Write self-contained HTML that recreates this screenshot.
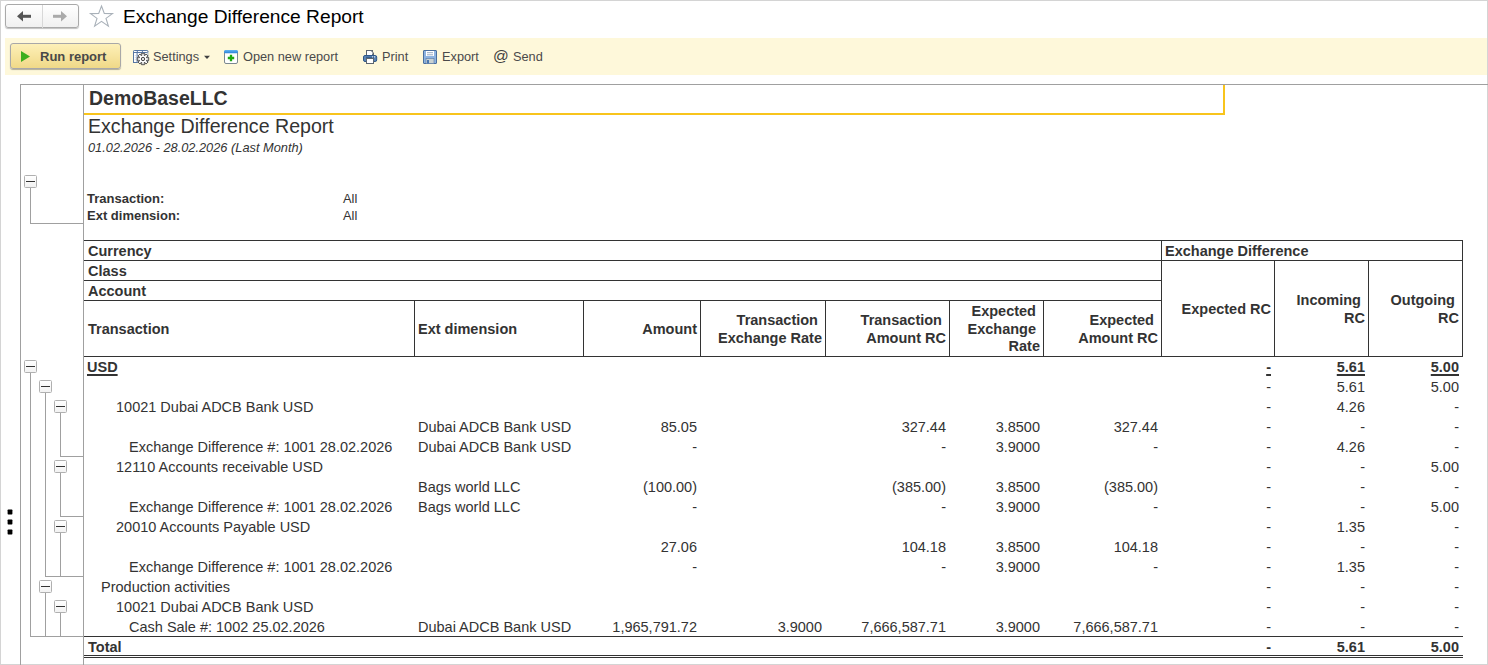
<!DOCTYPE html>
<html><head><meta charset="utf-8"><style>
html,body{margin:0;padding:0;}
body{width:1488px;height:665px;position:relative;overflow:hidden;background:#fff;font-family:"Liberation Sans", sans-serif;}
</style></head><body>
<div style="position:absolute;left:0px;top:0px;width:1488px;height:665px;box-sizing:border-box;border-left:1px solid #d4d4d4;border-top:1px solid #d4d4d4;border-right:1px solid #d4d4d4;border-bottom:1px solid #d4d4d4"></div><div style="position:absolute;left:5px;top:4px;width:72px;height:22px;border:1px solid #a9a9a9;border-radius:3px;background:linear-gradient(#ffffff,#f0f0f0);box-shadow:0 1px 1px rgba(0,0,0,0.25)"></div><div style="position:absolute;left:42px;top:5px;width:1px;height:23px;background:#d8d8d8"></div><svg style="position:absolute;left:0;top:0" width="120" height="35"><path d="M17 16.2 L23 11 L23 21.5 Z" fill="#555"/><rect x="22" y="14.8" width="9" height="3" fill="#555"/><path d="M67 16.2 L61 11 L61 21.5 Z" fill="#aaa"/><rect x="53" y="14.8" width="9" height="3" fill="#aaa"/><path d="M101.5 6 L104.3 13.4 L112.5 13.6 L106 18.4 L108.4 26.2 L101.5 21.4 L94.6 26.2 L97 18.4 L90.5 13.6 L98.7 13.4 Z" fill="none" stroke="#a9b1b9" stroke-width="1.1"/></svg><div style="position:absolute;left:123px;top:5px;line-height:24px;font-size:19.2px;font-weight:400;color:#000;white-space:pre;">Exchange Difference Report</div><div style="position:absolute;left:5px;top:38px;width:1482px;height:37px;background:#fef8da"></div><div style="position:absolute;left:10px;top:43px;width:109px;height:24px;border:1px solid #a8a8a8;border-radius:3px;background:linear-gradient(#fdf0b8,#f0d988);box-shadow:0 1px 1px rgba(0,0,0,0.3)"></div><svg style="position:absolute;left:0;top:0" width="40" height="75"><path d="M21 51 L30 56.5 L21 62 Z" fill="#3cae1e"/></svg><div style="position:absolute;left:40px;top:47px;line-height:20px;font-size:13px;font-weight:700;color:#484848;white-space:pre;">Run report</div><div style="position:absolute;left:153px;top:47px;line-height:20px;font-size:12.75px;font-weight:400;color:#4a4a4a;white-space:pre;">Settings</div><div style="position:absolute;left:243px;top:47px;line-height:20px;font-size:12.75px;font-weight:400;color:#4a4a4a;white-space:pre;">Open new report</div><div style="position:absolute;left:382px;top:47px;line-height:20px;font-size:12.75px;font-weight:400;color:#4a4a4a;white-space:pre;">Print</div><div style="position:absolute;left:442px;top:47px;line-height:20px;font-size:12.75px;font-weight:400;color:#4a4a4a;white-space:pre;">Export</div><div style="position:absolute;left:493px;top:46px;line-height:20px;font-size:15.5px;font-weight:400;color:#404040;white-space:pre;">@</div><div style="position:absolute;left:513px;top:47px;line-height:20px;font-size:12.75px;font-weight:400;color:#4a4a4a;white-space:pre;">Send</div><svg style="position:absolute;left:0;top:0" width="560" height="75">
<rect x="133.5" y="50.5" width="14.4" height="12" rx="1" fill="#fff" stroke="#9fb3cf"/>
<rect x="133.5" y="50.5" width="14.4" height="2" rx="1" fill="#fff" stroke="#5676a3"/>
<rect x="133.5" y="52.5" width="3.6" height="10" fill="#fff" stroke="#5676a3"/>
<path d="M137.3 50.5 v2 M142.4 50.5 v2" stroke="#5676a3"/>
<path d="M135.3 55.5 v0.6 M135.3 57.5 v0.6 M135.3 59.5 v0.6" stroke="#8098bb" stroke-width="0.8"/>
<path d="M141.48 53.30 L144.52 53.30 L144.05 55.24 L144.91 55.60 L145.96 53.90 L148.10 56.04 L146.40 57.09 L146.76 57.95 L148.70 57.48 L148.70 60.52 L146.76 60.05 L146.40 60.91 L148.10 61.96 L145.96 64.10 L144.91 62.40 L144.05 62.76 L144.52 64.70 L141.48 64.70 L141.95 62.76 L141.09 62.40 L140.04 64.10 L137.90 61.96 L139.60 60.91 L139.24 60.05 L137.30 60.52 L137.30 57.48 L139.24 57.95 L139.60 57.09 L137.90 56.04 L140.04 53.90 L141.09 55.60 L141.95 55.24 Z" fill="#fff" stroke="#4a4a4a" stroke-width="0.95" stroke-linejoin="miter"/>
<circle cx="143" cy="59" r="1.7" fill="#ddd" stroke="#4a4a4a" stroke-width="1"/>
<path d="M204 55.8 L210 55.8 L207 59 Z" fill="#404040"/>
<rect x="224.5" y="50.5" width="13" height="13" rx="1.5" fill="#fff" stroke="#7b8890"/>
<defs><linearGradient id="gb" x1="0" y1="0" x2="0" y2="1"><stop offset="0" stop-color="#62b4f2"/><stop offset="1" stop-color="#2a82d8"/></linearGradient></defs><rect x="224" y="50" width="14" height="3.2" rx="1.5" fill="url(#gb)"/>
<path d="M231 54.8 v6.4 M227.8 58 h6.4" stroke="#1fa80f" stroke-width="2.3"/>
<rect x="366.5" y="50.5" width="6" height="5" fill="#fff" stroke="#5c6670"/>
<path d="M371 50.5 L373.5 53 L373.5 55.5" fill="#fff" stroke="#5c6670"/>
<rect x="363.5" y="55.5" width="13.2" height="6" rx="1.5" fill="#5a84b5" stroke="#2f5888"/>
<path d="M366 57.3 h8" stroke="#2f5888" stroke-width="1"/>
<rect x="366.5" y="58.5" width="7" height="5" fill="#fff" stroke="#5c6670"/>
<circle cx="372.5" cy="56.8" r="0.6" fill="#fff"/><circle cx="374.6" cy="56.8" r="0.6" fill="#fff"/>
<rect x="423.5" y="50.5" width="13" height="13" rx="0.5" fill="#8db3e0" stroke="#4a6f9e"/>
<rect x="426" y="51" width="8" height="5" fill="#fff"/>
<path d="M427 52.7 h6 M427 54.8 h6" stroke="#8aa0bb" stroke-width="0.9"/>
<rect x="426" y="58.6" width="8" height="4.9" fill="#c9d2d3" stroke="#5a7aa5" stroke-width="0.6"/>
<rect x="427" y="60" width="2" height="3.5" fill="#4a77b0"/>
</svg><div style="position:absolute;left:20px;top:84px;width:1468px;height:1px;background:#a0a0a0"></div><div style="position:absolute;left:20px;top:84px;width:1px;height:581px;background:#a0a0a0"></div><div style="position:absolute;left:83px;top:84px;width:1px;height:581px;background:#a0a0a0"></div><div style="position:absolute;left:84px;top:113px;width:1141px;height:2px;background:#f8c41c"></div><div style="position:absolute;left:1223px;top:85px;width:2px;height:30px;background:#f8c41c"></div><div style="position:absolute;left:89px;top:86px;line-height:24px;font-size:19.5px;font-weight:700;color:#333;white-space:pre;">DemoBaseLLC</div><div style="position:absolute;left:88px;top:115px;line-height:22px;font-size:19.6px;font-weight:400;color:#333;white-space:pre;">Exchange Difference Report</div><div style="position:absolute;left:88px;top:139px;line-height:18px;font-size:12.8px;font-weight:400;color:#333;white-space:pre;font-style:italic">01.02.2026 - 28.02.2026 (Last Month)</div><div style="position:absolute;left:87px;top:190px;line-height:18px;font-size:13px;font-weight:700;color:#333;white-space:pre;">Transaction:</div><div style="position:absolute;left:87px;top:207px;line-height:18px;font-size:13px;font-weight:700;color:#333;white-space:pre;">Ext dimension:</div><div style="position:absolute;left:343px;top:190px;line-height:18px;font-size:12.8px;font-weight:400;color:#333;white-space:pre;">All</div><div style="position:absolute;left:343px;top:207px;line-height:18px;font-size:12.8px;font-weight:400;color:#333;white-space:pre;">All</div><div style="position:absolute;left:24px;top:175px;width:11px;height:11px;border:1px solid #b0b0b0;border-radius:1.5px;background:linear-gradient(#fff,#f2f2f2)"></div><div style="position:absolute;left:26px;top:181px;width:9px;height:1px;background:#333"></div><div style="position:absolute;left:30px;top:188px;width:1px;height:36px;background:#a0a0a0"></div><div style="position:absolute;left:30px;top:223px;width:54px;height:1px;background:#a0a0a0"></div><div style="position:absolute;left:84px;top:240px;width:1379px;height:1px;background:#333"></div><div style="position:absolute;left:84px;top:260px;width:1379px;height:1px;background:#333"></div><div style="position:absolute;left:84px;top:280px;width:1078px;height:1px;background:#333"></div><div style="position:absolute;left:84px;top:300px;width:1078px;height:1px;background:#333"></div><div style="position:absolute;left:84px;top:356px;width:1379px;height:1px;background:#333"></div><div style="position:absolute;left:1161px;top:240px;width:1px;height:117px;background:#333"></div><div style="position:absolute;left:1462px;top:240px;width:1px;height:117px;background:#333"></div><div style="position:absolute;left:414px;top:300px;width:1px;height:57px;background:#333"></div><div style="position:absolute;left:583px;top:300px;width:1px;height:57px;background:#333"></div><div style="position:absolute;left:700px;top:300px;width:1px;height:57px;background:#333"></div><div style="position:absolute;left:825px;top:300px;width:1px;height:57px;background:#333"></div><div style="position:absolute;left:949px;top:300px;width:1px;height:57px;background:#333"></div><div style="position:absolute;left:1043px;top:300px;width:1px;height:57px;background:#333"></div><div style="position:absolute;left:1274px;top:260px;width:1px;height:97px;background:#333"></div><div style="position:absolute;left:1368px;top:260px;width:1px;height:97px;background:#333"></div><div style="position:absolute;left:88px;top:242px;line-height:19px;font-size:14.5px;font-weight:700;color:#333;white-space:pre;">Currency</div><div style="position:absolute;left:88px;top:262px;line-height:19px;font-size:14.5px;font-weight:700;color:#333;white-space:pre;">Class</div><div style="position:absolute;left:88px;top:282px;line-height:19px;font-size:14.5px;font-weight:700;color:#333;white-space:pre;">Account</div><div style="position:absolute;left:1165px;top:242px;line-height:19px;font-size:14.5px;font-weight:700;color:#333;white-space:pre;">Exchange Difference</div><div style="position:absolute;left:88px;top:319px;line-height:20px;font-size:14.5px;font-weight:700;color:#333;white-space:pre;">Transaction</div><div style="position:absolute;left:418px;top:319px;line-height:20px;font-size:14.5px;font-weight:700;color:#333;white-space:pre;">Ext dimension</div><div style="position:absolute;right:791px;top:319px;line-height:20px;font-size:14.5px;font-weight:700;color:#333;white-space:pre;text-align:right;">Amount</div><div style="position:absolute;right:666px;top:312px;line-height:17.6px;font-size:14.5px;font-weight:700;color:#333;white-space:pre;text-align:right;">Transaction 
Exchange Rate</div><div style="position:absolute;right:542px;top:312px;line-height:17.6px;font-size:14.5px;font-weight:700;color:#333;white-space:pre;text-align:right;">Transaction 
Amount RC</div><div style="position:absolute;right:448px;top:303px;line-height:17.6px;font-size:14.5px;font-weight:700;color:#333;white-space:pre;text-align:right;">Expected 
Exchange 
Rate</div><div style="position:absolute;right:330px;top:312px;line-height:17.6px;font-size:14.5px;font-weight:700;color:#333;white-space:pre;text-align:right;">Expected 
Amount RC</div><div style="position:absolute;right:217px;top:299px;line-height:20px;font-size:14.5px;font-weight:700;color:#333;white-space:pre;text-align:right;">Expected RC</div><div style="position:absolute;right:123px;top:292px;line-height:17.6px;font-size:14.5px;font-weight:700;color:#333;white-space:pre;text-align:right;">Incoming 
RC</div><div style="position:absolute;right:29px;top:292px;line-height:17.6px;font-size:14.5px;font-weight:700;color:#333;white-space:pre;text-align:right;">Outgoing 
RC</div><div style="position:absolute;left:87px;top:358px;line-height:19px;font-size:14.5px;font-weight:700;color:#333;white-space:pre;text-decoration:underline;text-decoration-thickness:2px;text-underline-offset:2px">USD</div><div style="position:absolute;right:217px;top:358px;line-height:19px;font-size:14.5px;font-weight:700;color:#333;white-space:pre;text-align:right;text-decoration:underline;text-decoration-thickness:2px;text-underline-offset:2px">-</div><div style="position:absolute;right:123px;top:358px;line-height:19px;font-size:14.5px;font-weight:700;color:#333;white-space:pre;text-align:right;text-decoration:underline;text-decoration-thickness:2px;text-underline-offset:2px">5.61</div><div style="position:absolute;right:29px;top:358px;line-height:19px;font-size:14.5px;font-weight:700;color:#333;white-space:pre;text-align:right;text-decoration:underline;text-decoration-thickness:2px;text-underline-offset:2px">5.00</div><div style="position:absolute;right:217px;top:378px;line-height:19px;font-size:14.5px;font-weight:400;color:#333;white-space:pre;text-align:right;">-</div><div style="position:absolute;right:123px;top:378px;line-height:19px;font-size:14.5px;font-weight:400;color:#333;white-space:pre;text-align:right;">5.61</div><div style="position:absolute;right:29px;top:378px;line-height:19px;font-size:14.5px;font-weight:400;color:#333;white-space:pre;text-align:right;">5.00</div><div style="position:absolute;left:116px;top:398px;line-height:19px;font-size:14.5px;font-weight:400;color:#333;white-space:pre;">10021 Dubai ADCB Bank USD</div><div style="position:absolute;right:217px;top:398px;line-height:19px;font-size:14.5px;font-weight:400;color:#333;white-space:pre;text-align:right;">-</div><div style="position:absolute;right:123px;top:398px;line-height:19px;font-size:14.5px;font-weight:400;color:#333;white-space:pre;text-align:right;">4.26</div><div style="position:absolute;right:29px;top:398px;line-height:19px;font-size:14.5px;font-weight:400;color:#333;white-space:pre;text-align:right;">-</div><div style="position:absolute;left:418px;top:418px;line-height:19px;font-size:14.5px;font-weight:400;color:#333;white-space:pre;">Dubai ADCB Bank USD</div><div style="position:absolute;right:791px;top:418px;line-height:19px;font-size:14.5px;font-weight:400;color:#333;white-space:pre;text-align:right;">85.05</div><div style="position:absolute;right:542px;top:418px;line-height:19px;font-size:14.5px;font-weight:400;color:#333;white-space:pre;text-align:right;">327.44</div><div style="position:absolute;right:448px;top:418px;line-height:19px;font-size:14.5px;font-weight:400;color:#333;white-space:pre;text-align:right;">3.8500</div><div style="position:absolute;right:330px;top:418px;line-height:19px;font-size:14.5px;font-weight:400;color:#333;white-space:pre;text-align:right;">327.44</div><div style="position:absolute;right:217px;top:418px;line-height:19px;font-size:14.5px;font-weight:400;color:#333;white-space:pre;text-align:right;">-</div><div style="position:absolute;right:123px;top:418px;line-height:19px;font-size:14.5px;font-weight:400;color:#333;white-space:pre;text-align:right;">-</div><div style="position:absolute;right:29px;top:418px;line-height:19px;font-size:14.5px;font-weight:400;color:#333;white-space:pre;text-align:right;">-</div><div style="position:absolute;left:129px;top:438px;line-height:19px;font-size:14.5px;font-weight:400;color:#333;white-space:pre;">Exchange Difference #: 1001 28.02.2026</div><div style="position:absolute;left:418px;top:438px;line-height:19px;font-size:14.5px;font-weight:400;color:#333;white-space:pre;">Dubai ADCB Bank USD</div><div style="position:absolute;right:791px;top:438px;line-height:19px;font-size:14.5px;font-weight:400;color:#333;white-space:pre;text-align:right;">-</div><div style="position:absolute;right:542px;top:438px;line-height:19px;font-size:14.5px;font-weight:400;color:#333;white-space:pre;text-align:right;">-</div><div style="position:absolute;right:448px;top:438px;line-height:19px;font-size:14.5px;font-weight:400;color:#333;white-space:pre;text-align:right;">3.9000</div><div style="position:absolute;right:330px;top:438px;line-height:19px;font-size:14.5px;font-weight:400;color:#333;white-space:pre;text-align:right;">-</div><div style="position:absolute;right:217px;top:438px;line-height:19px;font-size:14.5px;font-weight:400;color:#333;white-space:pre;text-align:right;">-</div><div style="position:absolute;right:123px;top:438px;line-height:19px;font-size:14.5px;font-weight:400;color:#333;white-space:pre;text-align:right;">4.26</div><div style="position:absolute;right:29px;top:438px;line-height:19px;font-size:14.5px;font-weight:400;color:#333;white-space:pre;text-align:right;">-</div><div style="position:absolute;left:116px;top:458px;line-height:19px;font-size:14.5px;font-weight:400;color:#333;white-space:pre;">12110 Accounts receivable USD</div><div style="position:absolute;right:217px;top:458px;line-height:19px;font-size:14.5px;font-weight:400;color:#333;white-space:pre;text-align:right;">-</div><div style="position:absolute;right:123px;top:458px;line-height:19px;font-size:14.5px;font-weight:400;color:#333;white-space:pre;text-align:right;">-</div><div style="position:absolute;right:29px;top:458px;line-height:19px;font-size:14.5px;font-weight:400;color:#333;white-space:pre;text-align:right;">5.00</div><div style="position:absolute;left:418px;top:478px;line-height:19px;font-size:14.5px;font-weight:400;color:#333;white-space:pre;">Bags world LLC</div><div style="position:absolute;right:791px;top:478px;line-height:19px;font-size:14.5px;font-weight:400;color:#333;white-space:pre;text-align:right;">(100.00)</div><div style="position:absolute;right:542px;top:478px;line-height:19px;font-size:14.5px;font-weight:400;color:#333;white-space:pre;text-align:right;">(385.00)</div><div style="position:absolute;right:448px;top:478px;line-height:19px;font-size:14.5px;font-weight:400;color:#333;white-space:pre;text-align:right;">3.8500</div><div style="position:absolute;right:330px;top:478px;line-height:19px;font-size:14.5px;font-weight:400;color:#333;white-space:pre;text-align:right;">(385.00)</div><div style="position:absolute;right:217px;top:478px;line-height:19px;font-size:14.5px;font-weight:400;color:#333;white-space:pre;text-align:right;">-</div><div style="position:absolute;right:123px;top:478px;line-height:19px;font-size:14.5px;font-weight:400;color:#333;white-space:pre;text-align:right;">-</div><div style="position:absolute;right:29px;top:478px;line-height:19px;font-size:14.5px;font-weight:400;color:#333;white-space:pre;text-align:right;">-</div><div style="position:absolute;left:129px;top:498px;line-height:19px;font-size:14.5px;font-weight:400;color:#333;white-space:pre;">Exchange Difference #: 1001 28.02.2026</div><div style="position:absolute;left:418px;top:498px;line-height:19px;font-size:14.5px;font-weight:400;color:#333;white-space:pre;">Bags world LLC</div><div style="position:absolute;right:791px;top:498px;line-height:19px;font-size:14.5px;font-weight:400;color:#333;white-space:pre;text-align:right;">-</div><div style="position:absolute;right:542px;top:498px;line-height:19px;font-size:14.5px;font-weight:400;color:#333;white-space:pre;text-align:right;">-</div><div style="position:absolute;right:448px;top:498px;line-height:19px;font-size:14.5px;font-weight:400;color:#333;white-space:pre;text-align:right;">3.9000</div><div style="position:absolute;right:330px;top:498px;line-height:19px;font-size:14.5px;font-weight:400;color:#333;white-space:pre;text-align:right;">-</div><div style="position:absolute;right:217px;top:498px;line-height:19px;font-size:14.5px;font-weight:400;color:#333;white-space:pre;text-align:right;">-</div><div style="position:absolute;right:123px;top:498px;line-height:19px;font-size:14.5px;font-weight:400;color:#333;white-space:pre;text-align:right;">-</div><div style="position:absolute;right:29px;top:498px;line-height:19px;font-size:14.5px;font-weight:400;color:#333;white-space:pre;text-align:right;">5.00</div><div style="position:absolute;left:116px;top:518px;line-height:19px;font-size:14.5px;font-weight:400;color:#333;white-space:pre;">20010 Accounts Payable USD</div><div style="position:absolute;right:217px;top:518px;line-height:19px;font-size:14.5px;font-weight:400;color:#333;white-space:pre;text-align:right;">-</div><div style="position:absolute;right:123px;top:518px;line-height:19px;font-size:14.5px;font-weight:400;color:#333;white-space:pre;text-align:right;">1.35</div><div style="position:absolute;right:29px;top:518px;line-height:19px;font-size:14.5px;font-weight:400;color:#333;white-space:pre;text-align:right;">-</div><div style="position:absolute;right:791px;top:538px;line-height:19px;font-size:14.5px;font-weight:400;color:#333;white-space:pre;text-align:right;">27.06</div><div style="position:absolute;right:542px;top:538px;line-height:19px;font-size:14.5px;font-weight:400;color:#333;white-space:pre;text-align:right;">104.18</div><div style="position:absolute;right:448px;top:538px;line-height:19px;font-size:14.5px;font-weight:400;color:#333;white-space:pre;text-align:right;">3.8500</div><div style="position:absolute;right:330px;top:538px;line-height:19px;font-size:14.5px;font-weight:400;color:#333;white-space:pre;text-align:right;">104.18</div><div style="position:absolute;right:217px;top:538px;line-height:19px;font-size:14.5px;font-weight:400;color:#333;white-space:pre;text-align:right;">-</div><div style="position:absolute;right:123px;top:538px;line-height:19px;font-size:14.5px;font-weight:400;color:#333;white-space:pre;text-align:right;">-</div><div style="position:absolute;right:29px;top:538px;line-height:19px;font-size:14.5px;font-weight:400;color:#333;white-space:pre;text-align:right;">-</div><div style="position:absolute;left:129px;top:558px;line-height:19px;font-size:14.5px;font-weight:400;color:#333;white-space:pre;">Exchange Difference #: 1001 28.02.2026</div><div style="position:absolute;right:791px;top:558px;line-height:19px;font-size:14.5px;font-weight:400;color:#333;white-space:pre;text-align:right;">-</div><div style="position:absolute;right:542px;top:558px;line-height:19px;font-size:14.5px;font-weight:400;color:#333;white-space:pre;text-align:right;">-</div><div style="position:absolute;right:448px;top:558px;line-height:19px;font-size:14.5px;font-weight:400;color:#333;white-space:pre;text-align:right;">3.9000</div><div style="position:absolute;right:330px;top:558px;line-height:19px;font-size:14.5px;font-weight:400;color:#333;white-space:pre;text-align:right;">-</div><div style="position:absolute;right:217px;top:558px;line-height:19px;font-size:14.5px;font-weight:400;color:#333;white-space:pre;text-align:right;">-</div><div style="position:absolute;right:123px;top:558px;line-height:19px;font-size:14.5px;font-weight:400;color:#333;white-space:pre;text-align:right;">1.35</div><div style="position:absolute;right:29px;top:558px;line-height:19px;font-size:14.5px;font-weight:400;color:#333;white-space:pre;text-align:right;">-</div><div style="position:absolute;left:101px;top:578px;line-height:19px;font-size:14.5px;font-weight:400;color:#333;white-space:pre;">Production activities</div><div style="position:absolute;right:217px;top:578px;line-height:19px;font-size:14.5px;font-weight:400;color:#333;white-space:pre;text-align:right;">-</div><div style="position:absolute;right:123px;top:578px;line-height:19px;font-size:14.5px;font-weight:400;color:#333;white-space:pre;text-align:right;">-</div><div style="position:absolute;right:29px;top:578px;line-height:19px;font-size:14.5px;font-weight:400;color:#333;white-space:pre;text-align:right;">-</div><div style="position:absolute;left:116px;top:598px;line-height:19px;font-size:14.5px;font-weight:400;color:#333;white-space:pre;">10021 Dubai ADCB Bank USD</div><div style="position:absolute;right:217px;top:598px;line-height:19px;font-size:14.5px;font-weight:400;color:#333;white-space:pre;text-align:right;">-</div><div style="position:absolute;right:123px;top:598px;line-height:19px;font-size:14.5px;font-weight:400;color:#333;white-space:pre;text-align:right;">-</div><div style="position:absolute;right:29px;top:598px;line-height:19px;font-size:14.5px;font-weight:400;color:#333;white-space:pre;text-align:right;">-</div><div style="position:absolute;left:129px;top:618px;line-height:19px;font-size:14.5px;font-weight:400;color:#333;white-space:pre;">Cash Sale #: 1002 25.02.2026</div><div style="position:absolute;left:418px;top:618px;line-height:19px;font-size:14.5px;font-weight:400;color:#333;white-space:pre;">Dubai ADCB Bank USD</div><div style="position:absolute;right:791px;top:618px;line-height:19px;font-size:14.5px;font-weight:400;color:#333;white-space:pre;text-align:right;">1,965,791.72</div><div style="position:absolute;right:666px;top:618px;line-height:19px;font-size:14.5px;font-weight:400;color:#333;white-space:pre;text-align:right;">3.9000</div><div style="position:absolute;right:542px;top:618px;line-height:19px;font-size:14.5px;font-weight:400;color:#333;white-space:pre;text-align:right;">7,666,587.71</div><div style="position:absolute;right:448px;top:618px;line-height:19px;font-size:14.5px;font-weight:400;color:#333;white-space:pre;text-align:right;">3.9000</div><div style="position:absolute;right:330px;top:618px;line-height:19px;font-size:14.5px;font-weight:400;color:#333;white-space:pre;text-align:right;">7,666,587.71</div><div style="position:absolute;right:217px;top:618px;line-height:19px;font-size:14.5px;font-weight:400;color:#333;white-space:pre;text-align:right;">-</div><div style="position:absolute;right:123px;top:618px;line-height:19px;font-size:14.5px;font-weight:400;color:#333;white-space:pre;text-align:right;">-</div><div style="position:absolute;right:29px;top:618px;line-height:19px;font-size:14.5px;font-weight:400;color:#333;white-space:pre;text-align:right;">-</div><div style="position:absolute;left:84px;top:636px;width:1379px;height:1px;background:#333"></div><div style="position:absolute;left:88px;top:638px;line-height:19px;font-size:14.5px;font-weight:700;color:#333;white-space:pre;">Total</div><div style="position:absolute;right:217px;top:638px;line-height:19px;font-size:14.5px;font-weight:700;color:#333;white-space:pre;text-align:right;">-</div><div style="position:absolute;right:123px;top:638px;line-height:19px;font-size:14.5px;font-weight:700;color:#333;white-space:pre;text-align:right;">5.61</div><div style="position:absolute;right:29px;top:638px;line-height:19px;font-size:14.5px;font-weight:700;color:#333;white-space:pre;text-align:right;">5.00</div><div style="position:absolute;left:84px;top:655px;width:1379px;height:1px;background:#333"></div><div style="position:absolute;left:84px;top:657px;width:1379px;height:1px;background:#333"></div><div style="position:absolute;left:24px;top:360px;width:11px;height:11px;border:1px solid #b0b0b0;border-radius:1.5px;background:linear-gradient(#fff,#f2f2f2)"></div><div style="position:absolute;left:26px;top:366px;width:9px;height:1px;background:#333"></div><div style="position:absolute;left:30px;top:373px;width:1px;height:264px;background:#a0a0a0"></div><div style="position:absolute;left:30px;top:636px;width:54px;height:1px;background:#a0a0a0"></div><div style="position:absolute;left:39px;top:380px;width:11px;height:11px;border:1px solid #b0b0b0;border-radius:1.5px;background:linear-gradient(#fff,#f2f2f2)"></div><div style="position:absolute;left:41px;top:386px;width:9px;height:1px;background:#333"></div><div style="position:absolute;left:45px;top:393px;width:1px;height:184px;background:#a0a0a0"></div><div style="position:absolute;left:45px;top:576px;width:39px;height:1px;background:#a0a0a0"></div><div style="position:absolute;left:54px;top:400px;width:11px;height:11px;border:1px solid #b0b0b0;border-radius:1.5px;background:linear-gradient(#fff,#f2f2f2)"></div><div style="position:absolute;left:56px;top:406px;width:9px;height:1px;background:#333"></div><div style="position:absolute;left:60px;top:413px;width:1px;height:44px;background:#a0a0a0"></div><div style="position:absolute;left:60px;top:456px;width:24px;height:1px;background:#a0a0a0"></div><div style="position:absolute;left:54px;top:460px;width:11px;height:11px;border:1px solid #b0b0b0;border-radius:1.5px;background:linear-gradient(#fff,#f2f2f2)"></div><div style="position:absolute;left:56px;top:466px;width:9px;height:1px;background:#333"></div><div style="position:absolute;left:60px;top:473px;width:1px;height:44px;background:#a0a0a0"></div><div style="position:absolute;left:60px;top:516px;width:24px;height:1px;background:#a0a0a0"></div><div style="position:absolute;left:54px;top:520px;width:11px;height:11px;border:1px solid #b0b0b0;border-radius:1.5px;background:linear-gradient(#fff,#f2f2f2)"></div><div style="position:absolute;left:56px;top:526px;width:9px;height:1px;background:#333"></div><div style="position:absolute;left:60px;top:533px;width:1px;height:44px;background:#a0a0a0"></div><div style="position:absolute;left:39px;top:580px;width:11px;height:11px;border:1px solid #b0b0b0;border-radius:1.5px;background:linear-gradient(#fff,#f2f2f2)"></div><div style="position:absolute;left:41px;top:586px;width:9px;height:1px;background:#333"></div><div style="position:absolute;left:45px;top:593px;width:1px;height:44px;background:#a0a0a0"></div><div style="position:absolute;left:54px;top:600px;width:11px;height:11px;border:1px solid #b0b0b0;border-radius:1.5px;background:linear-gradient(#fff,#f2f2f2)"></div><div style="position:absolute;left:56px;top:606px;width:9px;height:1px;background:#333"></div><div style="position:absolute;left:60px;top:613px;width:1px;height:24px;background:#a0a0a0"></div><svg style="position:absolute;left:0;top:500px" width="20" height="40"><rect x="7.6" y="9.6" width="4.8" height="4.8" rx="0.7"/><rect x="7.6" y="19.6" width="4.8" height="4.8" rx="0.7"/><rect x="7.6" y="29.6" width="4.8" height="4.8" rx="0.7"/></svg>
</body></html>
